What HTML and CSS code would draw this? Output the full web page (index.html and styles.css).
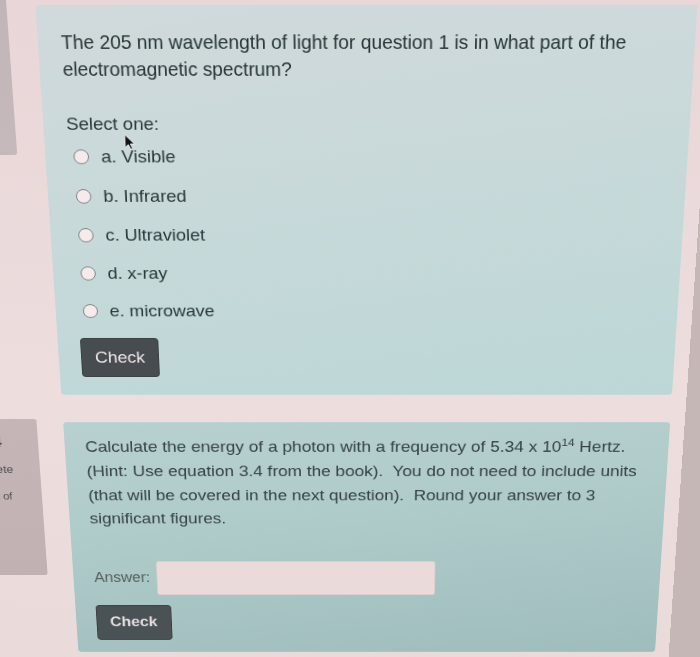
FILE: index.html
```html
<!DOCTYPE html>
<html lang="en">
<head>
<meta charset="utf-8">
<title>Quiz</title>
<link rel="stylesheet" href="styles.css">
</head>
<body>
<div class="screen">
  <div class="qrow">
    <div class="info info1">
      <div class="qno">Question <span class="num">3</span></div>
      <div class="state">Not complete</div>
      <div class="grade">Marked out of</div>
    </div>
    <div class="card card1">
      <div class="qtext">The 205 nm wavelength of light for question 1 is in what part of the<br>electromagnetic spectrum?</div>
      <div class="prompt">Select one:</div>
      <div class="answers">
        <label class="opt"><span class="radio"></span><span>a. Visible</span></label>
        <label class="opt"><span class="radio"></span><span>b. Infrared</span></label>
        <label class="opt"><span class="radio"></span><span>c. Ultraviolet</span></label>
        <label class="opt"><span class="radio"></span><span>d. x-ray</span></label>
        <label class="opt"><span class="radio"></span><span>e. microwave</span></label>
      </div>
      <button class="btn">Check</button>
      <svg class="cursor" width="11" height="18" viewBox="0 0 12 19"><path d="M1 1 L1 16 L4.6 12.6 L7.2 18 L9.4 17 L6.9 11.8 L11.5 11.8 Z" fill="#111" stroke="#f4f4f4" stroke-width="1"/></svg>
    </div>
  </div>
  <div class="qrow">
    <div class="info info2">
      <div class="qno">Question <span class="num">4</span></div>
      <div class="state">Not complete</div>
      <div class="grade">Marked out of</div>
    </div>
    <div class="card card2">
      <div class="qtext2">Calculate the energy of a photon with a frequency of 5.34 x 10<sup>14</sup> Hertz.<br>(Hint: Use equation 3.4 from the book).&nbsp; You do not need to include units<br>(that will be covered in the next question).&nbsp; Round your answer to 3<br>significant figures.</div>
      <div class="answer-row">
        <span class="alabel">Answer:</span>
        <input class="ainput" type="text">
      </div>
      <button class="btn btn2">Check</button>
    </div>
  </div>
</div>
</body>
</html>
```
FILE: styles.css
```css
html, body {
  margin: 0;
  padding: 0;
  overflow: hidden;
  background: #c6b7b7;
}

.screen {
  width: 834px;
  min-height: 860px;
  margin-left: -120px;
  padding-top: 5px;
  box-sizing: border-box;
  background: linear-gradient(180deg, #e9d6d8 0%, #eddddd 50%, #e9dada 100%);
  transform-origin: 488px 0;
  transform: perspective(800px) rotateX(-9.09deg);
  font-family: "Liberation Sans", Arial, sans-serif;
}

.qrow {
  display: flex;
  align-items: flex-start;
  gap: 29px;
}

.qrow + .qrow {
  margin-top: 33px;
}

.info {
  width: 126px;
  flex: none;
  box-sizing: border-box;
  padding: 14px 0 0 18px;
  border-radius: 0 3px 3px 0;
  color: #4f4b4c;
  font-size: 13.3px;
}

.info1 {
  margin-top: -8px;
  height: 165px;
  background: linear-gradient(180deg, #c2b5b7, #c6b9bb);
}

.info2 {
  margin-top: -4px;
  height: 195px;
  background: linear-gradient(180deg, #c5b5b7, #c1b1b3);
}

.qno {
  line-height: 26px;
}

.num {
  font-size: 20px;
  font-weight: bold;
}

.state {
  margin-top: 8.7px;
  line-height: 20px;
}

.grade {
  margin-top: 13.3px;
  line-height: 20px;
  font-size: 12.3px;
}

.card {
  width: 663px;
  flex: none;
  box-sizing: border-box;
  border-radius: 4px;
  position: relative;
}

.card1 {
  height: 429px;
  padding: 23.9px 20px 0 23.5px;
  background: linear-gradient(172deg, #d1d9db 0%, #c9d9da 40%, #bcd7d6 100%);
}

.card2 {
  height: 292px;
  padding: 15px 20px 0 22.5px;
  background: linear-gradient(174deg, #b8d1d0 0%, #acc9c8 50%, #9fbdbc 100%);
}

.qtext {
  font-size: 19.35px;
  line-height: 28px;
  color: #263436;
  white-space: nowrap;
}

.prompt {
  margin-top: 30px;
  font-size: 19px;
  line-height: 28px;
  color: #283638;
}

.answers {
  display: flex;
  flex-direction: column;
}

.opt {
  height: 42.9px;
  display: flex;
  align-items: center;
  gap: 12.5px;
  padding-left: 5.5px;
  font-size: 19px;
  color: #293839;
}

.radio {
  width: 16px;
  height: 16px;
  flex: none;
  box-sizing: border-box;
  border-radius: 50%;
  border: 1.7px solid #788181;
  background: #f6eaec;
}

.btn {
  display: block;
  margin-top: 9.5px;
  height: 46px;
  padding: 0 14.5px;
  font-family: "Liberation Sans", Arial, sans-serif;
  font-size: 19px;
  color: #efe9e9;
  background: #474c50;
  border: 1px solid #3b3f42;
  border-radius: 4px;
}

.btn2 {
  margin-top: 13px;
  background: #4b5256;
  color: #e2dede;
  font-weight: bold;
  font-size: 18px;
  padding: 0 15px;
}

.cursor {
  position: absolute;
  left: 82px;
  top: 134px;
}

.qtext2 {
  font-size: 19px;
  line-height: 29.8px;
  color: #364244;
  white-space: nowrap;
}

.qtext2 sup {
  font-size: 13px;
  line-height: 0;
  vertical-align: 7px;
}

.answer-row {
  margin-top: 38.8px;
  height: 44px;
  display: flex;
  align-items: center;
}

.alabel {
  width: 71.3px;
  flex: none;
  padding-left: 1px;
  box-sizing: border-box;
  font-size: 17.5px;
  color: #56605f;
}

.ainput {
  width: 315px;
  height: 44px;
  box-sizing: border-box;
  margin: 0;
  border: 1px solid #dccccc;
  border-radius: 3px;
  background: #eadada;
}
```
